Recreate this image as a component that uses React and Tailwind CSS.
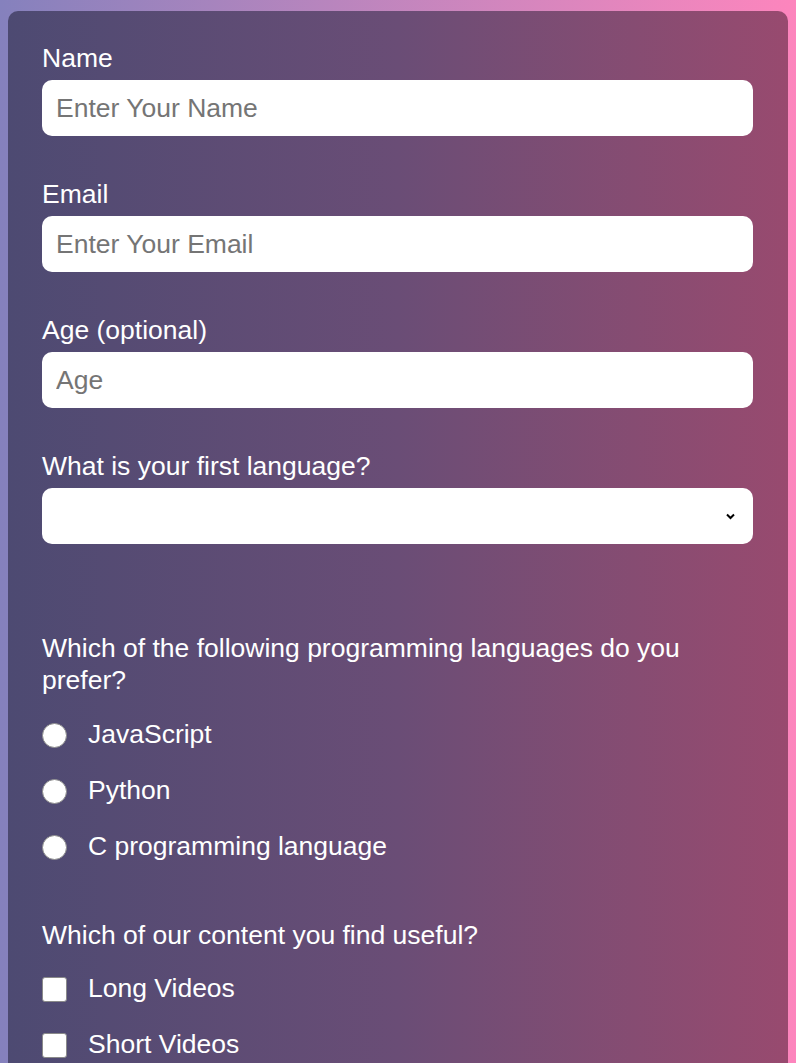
import React from 'react';

const fields = [
  { id: 'name', label: 'Name', type: 'text', placeholder: 'Enter Your Name' },
  { id: 'email', label: 'Email', type: 'email', placeholder: 'Enter Your Email' },
  { id: 'age', label: 'Age (optional)', type: 'number', placeholder: 'Age' },
];

const languages = ['JavaScript', 'Python', 'C programming language'];
const content = ['Long Videos', 'Short Videos'];

function TextField({ field, first }) {
  return (
    <div className={first ? '' : 'mt-[44px]'}>
      <label htmlFor={field.id} className="block leading-[28px]">
        {field.label}
      </label>
      <input
        id={field.id}
        type={field.type}
        placeholder={field.placeholder}
        className="mt-2 block h-14 w-full appearance-none rounded-[10px] bg-white px-[14px] text-[26.5px] text-[#333] placeholder:text-[#757575] outline-none"
      />
    </div>
  );
}

export default function App() {
  return (
    <div
      className="min-h-screen bg-gradient-to-r from-[#8581bd] to-[#fd85bd] px-2 pt-[11px] text-[26.5px] text-white"
      style={{ fontFamily: '"Liberation Sans", Arial, sans-serif' }}
    >
      <form className="rounded-t-[10px] bg-gradient-to-r from-[#4d4a72] via-[#6a4d76] to-[#984a6f] pl-[34px] pr-[35px] pt-[33px] pb-10">
        {fields.map((f, i) => (
          <TextField key={f.id} field={f} first={i === 0} />
        ))}

        <div className="mt-[44px]">
          <label htmlFor="lang" className="block leading-[28px]">
            What is your first language?
          </label>
          <div className="relative mt-2">
            <select
              id="lang"
              className="block h-14 w-full appearance-none rounded-[10px] bg-white px-[14px] text-[24px] text-black outline-none"
            >
              <option value=""></option>
            </select>
            <svg
              className="pointer-events-none absolute right-[18px] top-[25px] h-[7px] w-[9px]"
              viewBox="0 0 9 7"
              fill="none"
            >
              <path d="M1 1.5 L4.5 5 L8 1.5" stroke="#000" strokeWidth="2" />
            </svg>
          </div>
        </div>

        <p className="mt-[88px] leading-8">
          Which of the following programming languages do you prefer?
        </p>
        <div className="mt-[11px]">
          {languages.map((l) => (
            <label key={l} className="flex h-14 items-center gap-[21px]">
              <input
                type="radio"
                name="prog"
                className="h-[25px] w-[25px] appearance-none rounded-full border border-[#8a8a8a] bg-white"
              />
              <span>{l}</span>
            </label>
          ))}
        </div>

        <p className="mt-[44px] leading-8">Which of our content you find useful?</p>
        <div className="mt-[10px]">
          {content.map((c) => (
            <label key={c} className="flex h-14 items-center gap-[21px]">
              <input
                type="checkbox"
                className="h-[25px] w-[25px] appearance-none rounded-[3px] border border-[#8a8a8a] bg-white"
              />
              <span>{c}</span>
            </label>
          ))}
        </div>
      </form>
    </div>
  );
}
